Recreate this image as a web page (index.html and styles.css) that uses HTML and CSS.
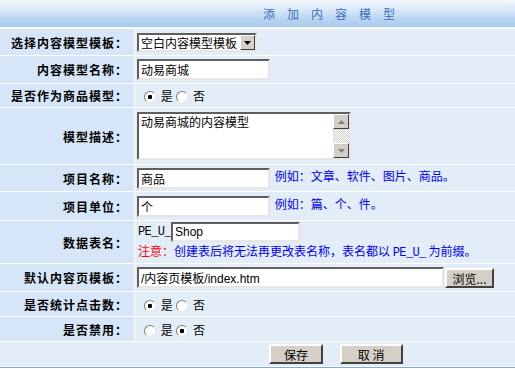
FILE: index.html
```html
<!DOCTYPE html>
<html lang="zh-CN">
<head>
  <meta charset="UTF-8" />
  <title>添加内容模型</title>
  <link rel="stylesheet" href="styles.css">
</head>
<body>
  <table class="form">
    <tr>
      <th colspan="2" class="title">添加内容模型</th>
    </tr>
    <tr class="r1">
      <td class="label">选择内容模型模板：</td>
      <td class="field">
        <span class="select-box">
          <select class="select"><option>空白内容模型模板</option></select>
          <span class="select-btn"><svg width="7" height="4" viewBox="0 0 7 4"><path d="M0 0H7L3.5 4Z" fill="#000"/></svg></span>
        </span>
      </td>
    </tr>
    <tr class="r2">
      <td class="label">内容模型名称：</td>
      <td class="field"><input type="text" class="txt" value="动易商城"></td>
    </tr>
    <tr class="r3">
      <td class="label">是否作为商品模型：</td>
      <td class="field">
        <input type="radio" name="goods" class="radio" checked> 是
        <input type="radio" name="goods" class="radio"> 否
      </td>
    </tr>
    <tr class="r4">
      <td class="label">模型描述：</td>
      <td class="field">
        <span class="area-box">
          <textarea class="area">动易商城的内容模型</textarea>
          <span class="scroll">
            <span class="scroll-btn"><svg width="7" height="4" viewBox="0 0 7 4"><path d="M3.5 0L7 4H0Z" fill="#808080"/></svg></span>
            <span class="scroll-track"></span>
            <span class="scroll-btn"><svg width="7" height="4" viewBox="0 0 7 4"><path d="M0 0H7L3.5 4Z" fill="#808080"/></svg></span>
          </span>
        </span>
      </td>
    </tr>
    <tr class="r5">
      <td class="label">项目名称：</td>
      <td class="field"><input type="text" class="txt" value="商品"> <span class="hint">例如：文章、软件、图片、商品。</span></td>
    </tr>
    <tr class="r6">
      <td class="label">项目单位：</td>
      <td class="field"><input type="text" class="txt" value="个"> <span class="hint">例如：篇、个、件。</span></td>
    </tr>
    <tr class="r7">
      <td class="label">数据表名：</td>
      <td class="field">
        <div class="table-name"><span class="mono">PE_U_</span><input type="text" class="txt txt-short" value="Shop"></div>
        <div class="note"><span class="warn">注意：</span><span class="hint">创建表后将无法再更改表名称，表名都以 <span class="mono">PE_U_</span> 为前缀。</span></div>
      </td>
    </tr>
    <tr class="r8">
      <td class="label">默认内容页模板：</td>
      <td class="field"><input type="text" class="txt txt-long" value="/内容页模板/index.htm"><button class="btn btn-browse">浏览...</button></td>
    </tr>
    <tr class="r9">
      <td class="label">是否统计点击数：</td>
      <td class="field">
        <input type="radio" name="hits" class="radio" checked> 是
        <input type="radio" name="hits" class="radio"> 否
      </td>
    </tr>
    <tr class="r10">
      <td class="label">是否禁用：</td>
      <td class="field">
        <input type="radio" name="off" class="radio"> 是
        <input type="radio" name="off" class="radio" checked> 否
      </td>
    </tr>
    <tr class="r11">
      <td colspan="2" class="actions">
        <button class="btn btn-save">保存</button>
        <button class="btn btn-cancel">取 消</button>
      </td>
    </tr>
  </table>
</body>
</html>
```

FILE: styles.css
```css
body {
  margin: 0;
  font-family: "Noto Sans CJK SC", "Liberation Sans", sans-serif;
  font-size: 12px;
  color: #000;
  background: #fff;
}

.form {
  width: 100%;
  border-collapse: separate;
  border-spacing: 0;
  border-bottom: 1px solid #7fa9dc;
}

.form td,
.form th {
  padding: 0;
  border-bottom: 1px solid #fff;
}

.title {
  height: 27px;
  border-bottom: 2px solid #fff !important;
  background: linear-gradient(#f3f8fd 0%, #dbe9f8 35%, #b9d5f2 70%, #a7caee 100%);
  color: #3b6cb7;
  font-weight: normal;
  letter-spacing: 12px;
  text-align: left;
  padding-left: 263px !important;
}

.label {
  width: 128px;
  background: #d6e6f8;
  border-right: 1px solid #fff;
  text-align: right;
  font-weight: bold;
  letter-spacing: 1px;
  padding-right: 6px !important;
  white-space: nowrap;
}

.field {
  background: #e3edf8;
  padding-left: 2px !important;
  white-space: nowrap;
}

.r1 td { height: 26px; }
.r2 td { height: 27px; }
.r3 td { height: 23px; }
.r4 td { height: 56px; }
.r5 td { height: 26px; }
.r6 td { height: 28px; }
.r7 td { height: 42px; }
.r8 td { height: 27px; }
.r9 td { height: 24px; }
.r10 td { height: 24px; }
.r11 td { height: 24px; }

/* inputs */
.txt {
  box-sizing: border-box;
  width: 133px;
  height: 21px;
  margin: 0;
  padding: 0 2px;
  border: 2px solid;
  border-color: #5f5f5f #e6e6e6 #e6e6e6 #5f5f5f;
  background: #fff;
  font-family: "Liberation Sans", "Noto Sans CJK SC", sans-serif;
  font-size: 12px;
  vertical-align: middle;
}

.txt-short {
  width: 129px;
  height: 20px;
}

.txt-long {
  width: 307px;
}

.select-box {
  display: inline-flex;
  align-items: center;
  box-sizing: border-box;
  width: 120px;
  height: 19px;
  border: 2px solid;
  border-color: #5f5f5f #e6e6e6 #e6e6e6 #5f5f5f;
  background: #fff;
  vertical-align: middle;
}

.select {
  appearance: none;
  flex: 1;
  min-width: 0;
  border: 0;
  padding: 0 0 0 2px;
  margin: 0;
  background: transparent;
  font-family: inherit;
  font-size: 12px;
  outline: none;
}

.select-btn {
  box-sizing: border-box;
  width: 15px;
  height: 15px;
  display: flex;
  align-items: center;
  justify-content: center;
  background: #d4d0c8;
  border: 1px solid;
  border-color: #fff #404040 #404040 #fff;
}

.radio {
  appearance: none;
  box-sizing: border-box;
  width: 12px;
  height: 12px;
  margin: 0 2px 0 1px;
  border-radius: 50%;
  border: 1px solid;
  border-color: #808080 #e8e8e8 #e8e8e8 #808080;
  background: #fff;
  vertical-align: -2px;
}

.radio:first-child {
  margin-left: 7px;
}

.radio:checked {
  background: radial-gradient(circle, #000 0 2px, #fff 2.5px);
}

.area-box {
  display: inline-flex;
  box-sizing: border-box;
  width: 214px;
  height: 48px;
  border: 2px solid;
  border-color: #5f5f5f #e6e6e6 #e6e6e6 #5f5f5f;
  background: #fff;
  vertical-align: middle;
}

.area {
  flex: 1;
  border: 0;
  margin: 0;
  padding: 0 2px;
  resize: none;
  overflow: hidden;
  font-family: inherit;
  font-size: 12px;
  line-height: 15px;
  outline: none;
}

.scroll {
  width: 16px;
  display: flex;
  flex-direction: column;
}

.scroll-btn {
  box-sizing: border-box;
  height: 15px;
  display: flex;
  align-items: center;
  justify-content: center;
  background: #d4d0c8;
  border: 1px solid;
  border-color: #fff #404040 #404040 #fff;
}

.scroll-track {
  flex: 1;
  background: repeating-conic-gradient(#fff 0 25%, #d4d0c8 0 50%) 0 0 / 2px 2px;
}

.hint {
  color: #0000ff;
  margin-left: 2px;
}

.note .hint {
  margin-left: 0;
}

.warn {
  color: #ff0000;
}

.mono {
  font-family: "Liberation Mono", monospace;
  font-size: 12px;
  letter-spacing: -0.6px;
}

.table-name {
  display: flex;
  align-items: center;
  padding-left: 1px;
}

.note {
  padding-left: 1px;
  line-height: 17px;
}

.btn {
  box-sizing: border-box;
  height: 20px;
  margin: 0;
  padding: 0;
  background: #d4d0c8;
  border: 2px solid;
  border-color: #fff #404040 #404040 #fff;
  font-family: inherit;
  font-size: 12px;
  color: #000;
  vertical-align: middle;
}

.btn-browse {
  width: 49px;
  margin-left: 1px;
}

.actions {
  background: #e3edf8;
  padding-left: 269px !important;
}

.btn-save {
  width: 54px;
  margin-right: 14px;
}

.btn-cancel {
  width: 63px;
}
```
